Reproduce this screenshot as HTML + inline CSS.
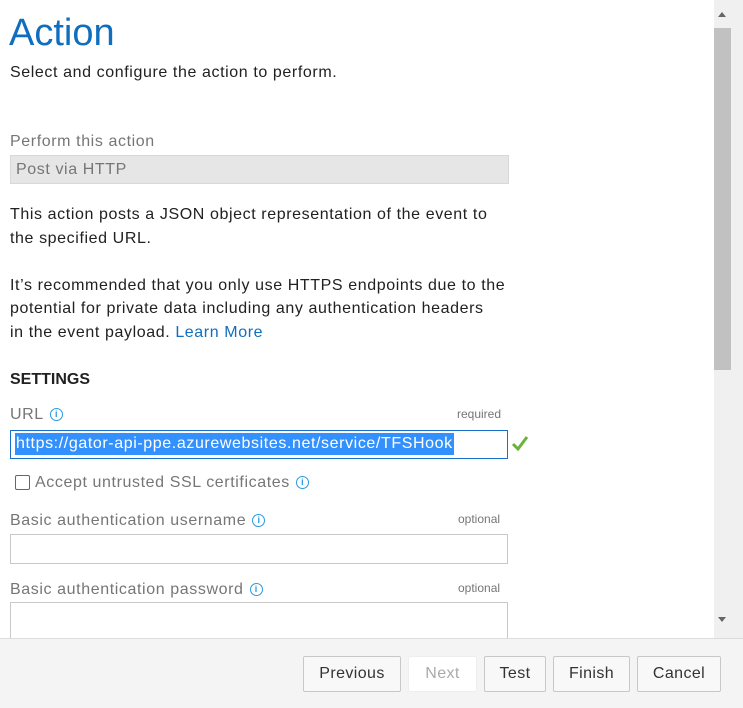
<!DOCTYPE html>
<html><head><style>
body{margin:0;width:743px;height:707px;overflow:hidden;background:#fff;font-family:"Liberation Sans",sans-serif;color:#212121;position:relative}
.a{position:absolute;white-space:nowrap}
.t{font-size:16px;letter-spacing:0.6px}
.g{color:#767676}
.box{position:absolute;left:10px;width:496px;border:1px solid #c8c8c8;background:#fff}
.i{display:inline-block;width:11px;height:11px;border:1.5px solid #2a9ae0;border-radius:50%;color:#2a9ae0;font-size:9px;line-height:11px;text-align:center;font-weight:bold;vertical-align:2px;margin-left:6px;letter-spacing:0}
.btn{position:absolute;top:656px;height:34px;border:1px solid #c8c8c8;border-radius:2px;background:#f8f8f8;font-size:16px;line-height:34px;text-align:center;color:#333;letter-spacing:0.4px}
</style></head><body>
<div class="a" style="left:9px;top:12px;font-size:38px;color:#106ebe;font-weight:300">Action</div>
<div class="a t" style="left:10px;top:64px">Select and configure the action to perform.</div>
<div class="a t g" style="left:10px;top:133px">Perform this action</div>
<div class="a" style="left:10px;top:155px;width:497px;height:27px;background:#e6e6e6;border:1px solid #d8d8d8"></div>
<div class="a t g" style="left:16px;top:161px">Post via HTTP</div>
<div class="a t" style="left:10px;top:203px;line-height:23.5px">This action posts a JSON object representation of the event to<br>the specified URL.<br><br>It’s recommended that you only use HTTPS endpoints due to the<br>potential for private data including any authentication headers<br>in the event payload. <span style="color:#106ebe">Learn More</span></div>
<div class="a t" style="left:10px;top:371px;font-weight:bold;letter-spacing:0">SETTINGS</div>
<div class="a t g" style="left:10px;top:406px">URL<span class="i">i</span></div>
<div class="a g" style="left:457px;top:407px;font-size:12px">required</div>
<div class="box" style="top:430px;height:27px;border-color:#1a6fc9"></div>
<div class="a t" style="left:15px;top:433px;background:#3390ff;color:#fff;padding:2px 1px">https://gator-api-ppe.azurewebsites.net/service/TFSHook</div>
<svg class="a" style="left:511px;top:435px" width="18" height="16"><path d="M2 9l5 5L16 2" stroke="#6bb43a" stroke-width="3" fill="none"/></svg>
<div class="a" style="left:15px;top:475px;width:13px;height:13px;border:1px solid #666;border-radius:2px"></div>
<div class="a t g" style="left:35px;top:474px">Accept untrusted SSL certificates<span class="i">i</span></div>
<div class="a t g" style="left:10px;top:512px">Basic authentication username<span class="i">i</span></div>
<div class="a g" style="left:458px;top:512px;font-size:12px">optional</div>
<div class="box" style="top:534px;height:28px"></div>
<div class="a t g" style="left:10px;top:581px">Basic authentication password<span class="i">i</span></div>
<div class="a g" style="left:458px;top:581px;font-size:12px">optional</div>
<div class="box" style="top:602px;height:40px"></div>
<div class="a" style="left:714px;top:0;width:29px;height:638px;background:#f0f0f0"></div>
<div class="a" style="left:714px;top:28px;width:17px;height:342px;background:#c1c1c1"></div>
<div class="a" style="left:718px;top:12px;width:0;height:0;border:4px solid transparent;border-bottom:5px solid #666;border-top:0"></div>
<div class="a" style="left:718px;top:617px;width:0;height:0;border:4px solid transparent;border-top:5px solid #666;border-bottom:0"></div>
<div class="a" style="left:0;top:638px;width:743px;height:69px;background:#f4f4f4;border-top:1px solid #dcdcdc"></div>
<div class="btn" style="left:303px;width:96px">Previous</div>
<div class="btn" style="left:408px;width:67px;background:#fff;border-color:#eee;color:#aaa">Next</div>
<div class="btn" style="left:484px;width:60px">Test</div>
<div class="btn" style="left:553px;width:75px">Finish</div>
<div class="btn" style="left:637px;width:82px">Cancel</div>
</body></html>
